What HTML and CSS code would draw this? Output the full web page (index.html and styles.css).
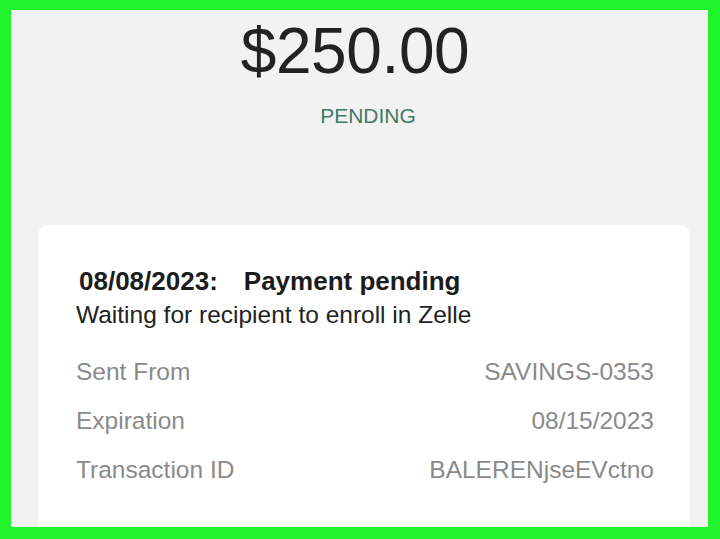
FILE: index.html
```html
<!DOCTYPE html>
<html>

<head>
	<meta charset="utf-8" />
	<meta name="viewport" content="width=device-width">
	<link rel="stylesheet" href="styles.css">
</head>

<body>
	<div class="frame">
		<div class="summary">
			<div class="amount">$250.00</div>
			<div class="state">PENDING</div>
		</div>

		<div class="card">
			<h2 class="card-title"><span class="date">08/08/2023:</span><span class="status">Payment pending</span></h2>
			<p class="card-note">Waiting for recipient to enroll in Zelle</p>

			<div class="details">
				<div class="detail-row">
					<span class="label">Sent From</span>
					<span class="value">SAVINGS-0353</span>
				</div>
				<div class="detail-row">
					<span class="label">Expiration</span>
					<span class="value">08/15/2023</span>
				</div>
				<div class="detail-row">
					<span class="label">Transaction ID</span>
					<span class="value">BALERENjseEVctno</span>
				</div>
			</div>
		</div>
	</div>
</body>

</html>
```

FILE: styles.css
```css
html,
body {
	margin: 0;
	height: 100%;
}

body {
	font-family: "Liberation Sans", Arial, Helvetica, sans-serif;
	background-color: #1ff42c;
}

.frame {
	box-sizing: border-box;
	height: 100%;
	border-style: solid;
	border-color: #1ff42c;
	border-width: 10px 12px 12px 11px;
	background-color: #f2f2f2;
	overflow: hidden;
	display: flex;
	flex-direction: column;
}

.summary {
	display: flex;
	flex-direction: column;
	align-items: center;
}

.amount {
	font-size: 64px;
	line-height: 64px;
	margin-top: 9px;
	padding-right: 9px;
	color: #222;
	letter-spacing: -0.4px;
}

.state {
	font-size: 21px;
	line-height: 24px;
	margin-top: 21px;
	padding-left: 17px;
	color: #3f7a65;
}

.card {
	flex: 1;
	margin: 97px 18px 0 27px;
	padding: 41px 36px 0 38px;
	background-color: #fff;
	border-radius: 10px 10px 0 0;
}

.card-title {
	margin: 0;
	padding-left: 3px;
	font-size: 26px;
	line-height: 30px;
	font-weight: bold;
	color: #1c1c1c;
}

.status {
	margin-left: 26px;
}

.card-note {
	margin: 5px 0 0;
	font-size: 24.5px;
	line-height: 28px;
	color: #222;
}

.details {
	margin-top: 18px;
}

.detail-row {
	display: flex;
	justify-content: space-between;
	font-size: 24.5px;
	line-height: 49px;
	color: #8a8a8a;
}
```
